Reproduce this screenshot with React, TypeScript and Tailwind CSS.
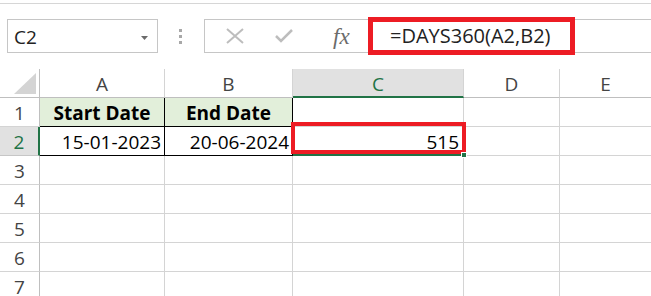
import React from "react";

const rows = [1, 2, 3, 4, 5, 6, 7];

const App = () => {
  return (
    <div className="relative h-[296px] w-[651px] overflow-hidden bg-white font-['Open_Sans',sans-serif] text-[#222]">
      {/* ribbon edge */}
      <div className="h-[4px] border-b border-[#d6d6d6]" />

      {/* name box + formula bar */}
      <div className="mt-[15px] flex h-[34px]">
        <div className="ml-[7px] flex w-[151px] items-center justify-between border border-[#c6c6c6] pt-[3px] pl-[6px] pr-[9px] text-[19px]">
          <span>C2</span>
          <svg width="7" height="4" viewBox="0 0 7 4">
            <path d="M0 0h7L3.5 4z" fill="#6b6b6b" />
          </svg>
        </div>

        <div className="ml-[21px] flex flex-col justify-center gap-[3px]">
          <div className="h-[3px] w-[3px] bg-[#a8a8a8]" />
          <div className="h-[3px] w-[3px] bg-[#a8a8a8]" />
          <div className="h-[3px] w-[3px] bg-[#a8a8a8]" />
        </div>

        <div className="relative ml-[22px] flex flex-1 items-center border-y border-l border-[#c6c6c6]">
          <svg className="ml-[21px]" width="18" height="16" viewBox="0 0 18 16">
            <path d="M1 1l16 14M17 1L1 15" stroke="#bdbdbd" strokeWidth="2" fill="none" />
          </svg>
          <svg className="ml-[31px]" width="18" height="14" viewBox="0 0 18 14">
            <path d="M1 7l5 5L17 1" stroke="#bdbdbd" strokeWidth="2.5" fill="none" />
          </svg>
          <span className="ml-[40px] font-['Liberation_Serif',serif] text-[23px] italic leading-none text-[#6b6b6b]">
            fx
          </span>
          <div className="absolute -top-[3px] left-[163px] flex h-[38px] w-[207px] items-center border-[5px] border-[#ed1c24] bg-white pl-[17px] text-[20px]">
            =DAYS360(A2,B2)
          </div>
        </div>
      </div>

      {/* sheet */}
      <div className="mt-[16px]">
        {/* column headers */}
        <div className="flex h-[29px] text-[19px] text-[#444]">
          <div className="relative w-[40px] border-r border-b border-[#bfbfbf]">
            <svg className="absolute bottom-[3px] right-[3px]" width="22" height="21" viewBox="0 0 22 21">
              <path d="M22 0V21H0z" fill="#d4d4d4" />
            </svg>
          </div>
          <div className="flex w-[125px] items-center justify-center border-r border-b border-[#d4d4d4] pt-[3px] [border-bottom-color:#bfbfbf]">A</div>
          <div className="flex w-[128px] items-center justify-center border-r border-b border-[#d4d4d4] pt-[3px] [border-bottom-color:#bfbfbf]">B</div>
          <div className="flex w-[171px] items-center justify-center border-r border-b-2 border-[#d4d4d4] bg-[#e1e1e1] pt-[3px] text-[#217346] [border-bottom-color:#217346]">C</div>
          <div className="flex w-[96px] items-center justify-center border-r border-b border-[#d4d4d4] pt-[3px] [border-bottom-color:#bfbfbf]">D</div>
          <div className="flex flex-1 items-center justify-center border-b border-[#bfbfbf] pt-[3px]">E</div>
        </div>

        {rows.map((r) => (
          <div key={r} className="flex h-[29px] text-[19px]">
            <div
              className={
                r === 2
                  ? "flex w-[40px] items-center justify-center border-r-2 border-b border-[#217346] bg-[#e1e1e1] pt-[3px] text-[#217346] [border-bottom-color:#c6c6c6]"
                  : "flex w-[40px] items-center justify-center border-r border-b border-[#bfbfbf] pt-[3px] text-[#444] [border-bottom-color:#d4d4d4]"
              }
            >
              {r}
            </div>

            {r === 1 && (
              <>
                <div className="flex w-[125px] items-center justify-center border-r border-b border-black bg-[#e2efda] pt-[3px] font-bold text-black">
                  Start Date
                </div>
                <div className="flex w-[128px] items-center justify-center border-r border-b border-black bg-[#e2efda] pt-[3px] font-bold text-black">
                  End Date
                </div>
              </>
            )}
            {r === 2 && (
              <>
                <div className="flex w-[125px] items-center justify-end border-r border-b border-black pt-[3px] pr-[3px] text-black">
                  15-01-2023
                </div>
                <div className="flex w-[128px] items-center justify-end border-r border-b border-black pt-[3px] pr-[3px] text-black">
                  20-06-2024
                </div>
              </>
            )}
            {r > 2 && (
              <>
                <div className="w-[125px] border-r border-b border-[#d4d4d4]" />
                <div className="w-[128px] border-r border-b border-[#d4d4d4]" />
              </>
            )}

            {r === 2 ? (
              <div className="relative flex w-[171px] items-center justify-end border-r border-b-2 border-[#d4d4d4] pt-[3px] pr-[4px] text-black [border-bottom-color:#217346]">
                <div className="absolute -top-[5px] -left-[2px] h-[32px] w-[175px] border-[4px] border-[#ed1c24]" />
                <span className="relative">515</span>
                <div className="absolute -right-[4px] -bottom-[4px] h-[6px] w-[6px] border border-white bg-[#217346]" />
              </div>
            ) : (
              <div className="w-[171px] border-r border-b border-[#d4d4d4]" />
            )}
            <div className="w-[96px] border-r border-b border-[#d4d4d4]" />
            <div className="flex-1 border-b border-[#d4d4d4]" />
          </div>
        ))}
      </div>
    </div>
  );
};

export default App;
